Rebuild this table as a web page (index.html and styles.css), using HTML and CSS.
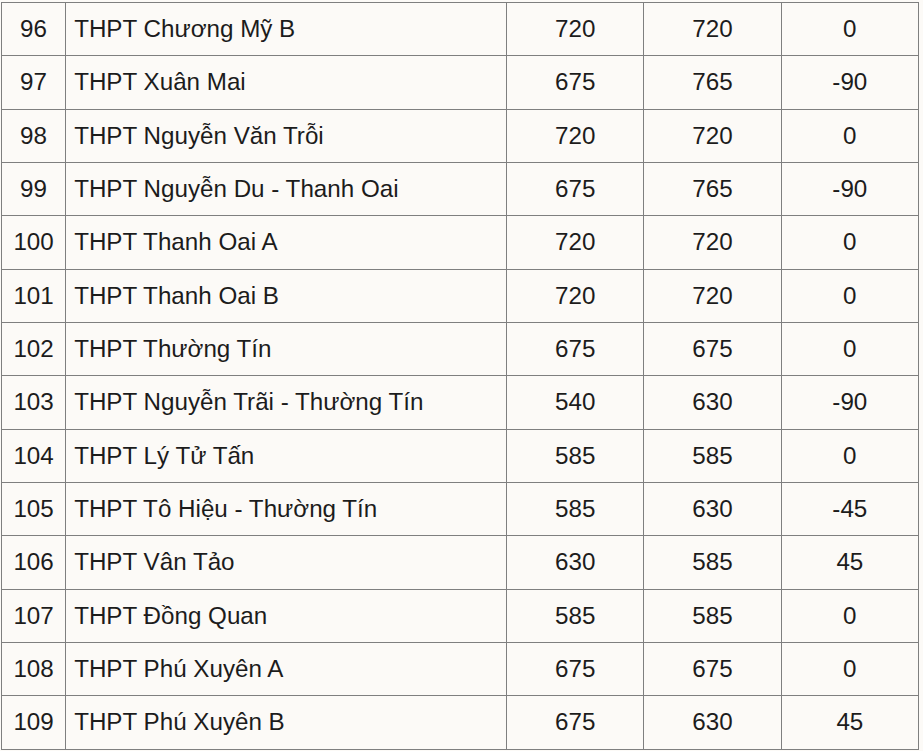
FILE: index.html
```html
<!DOCTYPE html>
<html lang="vi">
<head>
<meta charset="utf-8">
<link rel="stylesheet" href="styles.css">
</head>
<body>
<table class="scores">
  <colgroup>
    <col class="c-no"><col class="c-name"><col class="c-num"><col class="c-num"><col class="c-num">
  </colgroup>
  <tbody>
    <tr><td class="no">96</td><td class="name">THPT Chương Mỹ B</td><td>720</td><td>720</td><td>0</td></tr>
    <tr><td class="no">97</td><td class="name">THPT Xuân Mai</td><td>675</td><td>765</td><td>-90</td></tr>
    <tr><td class="no">98</td><td class="name">THPT Nguyễn Văn Trỗi</td><td>720</td><td>720</td><td>0</td></tr>
    <tr><td class="no">99</td><td class="name">THPT Nguyễn Du - Thanh Oai</td><td>675</td><td>765</td><td>-90</td></tr>
    <tr><td class="no">100</td><td class="name">THPT Thanh Oai A</td><td>720</td><td>720</td><td>0</td></tr>
    <tr><td class="no">101</td><td class="name">THPT Thanh Oai B</td><td>720</td><td>720</td><td>0</td></tr>
    <tr><td class="no">102</td><td class="name">THPT Thường Tín</td><td>675</td><td>675</td><td>0</td></tr>
    <tr><td class="no">103</td><td class="name">THPT Nguyễn Trãi - Thường Tín</td><td>540</td><td>630</td><td>-90</td></tr>
    <tr><td class="no">104</td><td class="name">THPT Lý Tử Tấn</td><td>585</td><td>585</td><td>0</td></tr>
    <tr><td class="no">105</td><td class="name">THPT Tô Hiệu - Thường Tín</td><td>585</td><td>630</td><td>-45</td></tr>
    <tr><td class="no">106</td><td class="name">THPT Vân Tảo</td><td>630</td><td>585</td><td>45</td></tr>
    <tr><td class="no">107</td><td class="name">THPT Đồng Quan</td><td>585</td><td>585</td><td>0</td></tr>
    <tr><td class="no">108</td><td class="name">THPT Phú Xuyên A</td><td>675</td><td>675</td><td>0</td></tr>
    <tr><td class="no">109</td><td class="name">THPT Phú Xuyên B</td><td>675</td><td>630</td><td>45</td></tr>
  </tbody>
</table>
</body>
</html>
```
FILE: styles.css
```css
html, body {
  margin: 0;
  padding: 0;
  background: #fcfaf7;
}
body {
  padding: 2px 0 0 1px;
  font-family: "Liberation Sans", Arial, sans-serif;
  color: #1c1c1c;
}
.scores {
  border-collapse: collapse;
  table-layout: fixed;
  width: 918px;
  font-size: 24.2px;
}
.c-no { width: 64px; }
.c-name { width: 440px; }
.c-num { width: 137px; }
.scores td {
  border: 1px solid #7f7f7f;
  height: 53.33px;
  padding: 0 8px;
  text-align: center;
  vertical-align: middle;
  box-sizing: border-box;
}
.scores td.name {
  text-align: left;
}
```
